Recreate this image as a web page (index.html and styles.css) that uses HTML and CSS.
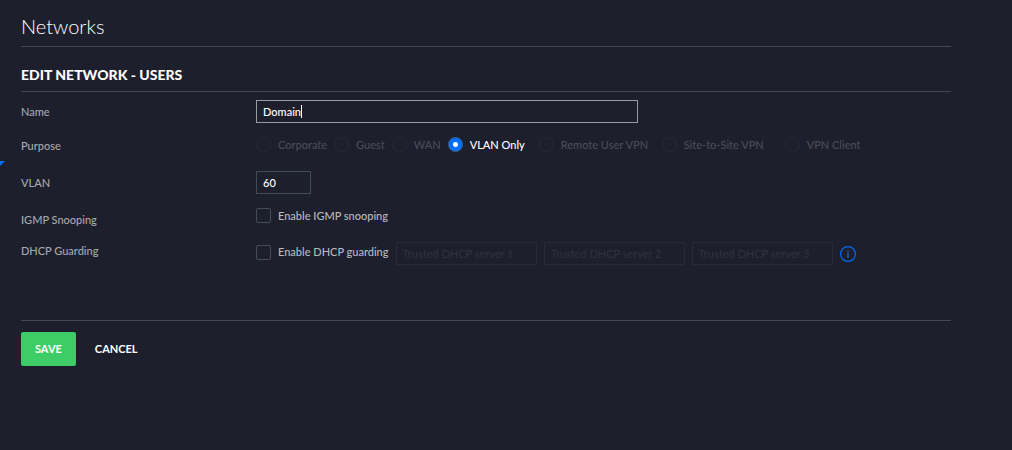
FILE: index.html
```html
<!DOCTYPE html>
<html lang="en">
<head>
<meta charset="utf-8">
<title>Networks</title>
<link rel="stylesheet" href="styles.css">
</head>
<body>
<span class="side-marker" aria-hidden="true"></span>
<main class="page">
  <h1 class="page-title">Networks</h1>
  <form class="form">
    <h2 class="form-title">Edit network - Users</h2>
    <div class="rows">
      <div class="row">
        <label class="row-label" for="name">Name</label>
        <div class="controls"><input class="text-input name-input" id="name" type="text" value="Domain"><span class="caret" aria-hidden="true"></span></div>
      </div>
      <div class="row row-short" role="radiogroup" aria-labelledby="purpose">
        <span class="row-label row-label-high" id="purpose">Purpose</span>
        <div class="controls purposes">
          <label class="choice disabled"><input class="radio" type="radio" name="purpose" disabled>Corporate</label>
          <label class="choice disabled"><input class="radio" type="radio" name="purpose" disabled>Guest</label>
          <label class="choice disabled"><input class="radio" type="radio" name="purpose" disabled>WAN</label>
          <label class="choice choice-medium"><input class="radio" type="radio" name="purpose" checked>VLAN Only</label>
          <label class="choice choice-wide disabled"><input class="radio" type="radio" name="purpose" disabled>Remote User VPN</label>
          <label class="choice choice-wide disabled"><input class="radio" type="radio" name="purpose" disabled>Site-to-Site VPN</label>
          <label class="choice disabled"><input class="radio" type="radio" name="purpose" disabled>VPN Client</label>
        </div>
      </div>
      <div class="row">
        <label class="row-label" for="vlan">VLAN</label>
        <div class="controls"><input class="text-input vlan-input" id="vlan" type="text" value="60"></div>
      </div>
      <div class="row row-short">
        <span class="row-label">IGMP Snooping</span>
        <div class="controls"><label class="choice"><input class="checkbox" type="checkbox">Enable IGMP snooping</label></div>
      </div>
      <div class="row">
        <span class="row-label row-label-high">DHCP Guarding</span>
        <div class="controls guarding">
          <label class="choice"><input class="checkbox" type="checkbox">Enable DHCP guarding</label>
          <input class="text-input server-input" type="text" placeholder="Trusted DHCP server 1" aria-label="Trusted DHCP server 1" disabled>
          <input class="text-input server-input" type="text" placeholder="Trusted DHCP server 2" aria-label="Trusted DHCP server 2" disabled>
          <input class="text-input server-input" type="text" placeholder="Trusted DHCP server 3" aria-label="Trusted DHCP server 3" disabled>
          <svg class="info" viewBox="0 0 16 16" role="img" aria-label="Information"><circle cx="8" cy="8" r="7.4" fill="none" stroke="#0069f2" stroke-width="1.2"/><path d="M7.2 4.8h1.6v1.3H7.2zM7.2 7h1.6v5H7.2z" fill="#1c5fae"/></svg>
        </div>
      </div>
    </div>
    <div class="actions">
      <button class="button save" type="button">Save</button>
      <button class="button" type="button">Cancel</button>
    </div>
  </form>
</main>
</body>
</html>
```
FILE: styles.css
```css
* { box-sizing: border-box; }

body {
  margin: 0;
  background: #1e1f2d;
  color: #b4b5ba;
  font: 11px/16px Lato, sans-serif;
}

.page { padding: 13px 61px 0 21px; }

.page-title {
  margin: 0;
  padding-bottom: 7px;
  border-bottom: 1px solid #42494f;
  color: #fff;
  font-size: 20px;
  font-weight: 300;
  line-height: 26px;
}

.form-title {
  margin: 0;
  padding: 20px 0 8px;
  border-bottom: 1px solid #42464f;
  color: #fff;
  font-size: 13px;
  font-weight: 900;
  line-height: 16px;
  text-transform: uppercase;
}

.rows {
  padding: 8px 0 41px;
  border-bottom: 1px solid #42494f;
}

.row {
  display: flex;
  align-items: flex-start;
  min-height: 37px;
}

.row-short { min-height: 34px; }

.row-label {
  flex: 0 0 235px;
  padding-top: 4px;
  color: #a6a7ac;
  font-weight: 500;
}

.row-label-high { padding-top: 1px; }

.controls {
  display: flex;
  flex: 1;
  position: relative;
}

.text-input {
  height: 23px;
  padding: 0 6px;
  border: 1px solid #424d52;
  border-radius: 0;
  outline: 0;
  background: transparent;
  color: #fff;
  font: 500 11px/16px Lato, sans-serif;
}

.name-input {
  width: 382px;
  border-color: #989c9d;
}

.caret {
  position: absolute;
  top: 5px;
  left: 45px;
  width: 1px;
  height: 13px;
  background: #fff;
}

.vlan-input { width: 55px; }

.choice {
  display: flex;
  flex: none;
  align-items: center;
  gap: 7px;
  height: 15px;
  color: #b8b9be;
  font-weight: 500;
  white-space: nowrap;
}

.purposes { gap: 7px; }

.choice-medium {
  min-width: 84px;
  color: #fff;
}

.choice-wide { min-width: 116px; }

.disabled { color: #4b4c56; }

.radio,
.checkbox {
  appearance: none;
  width: 15px;
  height: 15px;
  margin: 0;
  border: 1px solid #454e53;
  border-radius: 2px;
}

.radio { border-radius: 50%; }

.radio:disabled { border-color: #292a36; }

.radio:checked {
  border-color: #39668f;
  background: radial-gradient(circle, #fff 2px, #006fff 3px);
}

.guarding {
  align-items: center;
  gap: 7px;
}

.guarding .choice { margin-bottom: 3px; }

.server-input {
  width: 141px;
  border-color: #292a36;
}

.server-input::placeholder {
  color: #31323d;
  font-weight: 400;
  opacity: 1;
}

.info {
  flex: none;
  width: 16px;
  height: 16px;
}

.actions {
  display: flex;
  gap: 5px;
  padding-top: 11px;
}

.button {
  height: 34px;
  padding: 0 14px;
  border: 0;
  border-radius: 2px;
  background: transparent;
  color: #fff;
  font: 700 11px/16px Lato, sans-serif;
  text-transform: uppercase;
}

.save { background: #3dcc66; }

.form-title { font-size: 14px; }

.side-marker {
  position: absolute;
  top: 161px;
  left: 0;
  border-top: 5px solid #0070ff;
  border-right: 5px solid transparent;
}
```
